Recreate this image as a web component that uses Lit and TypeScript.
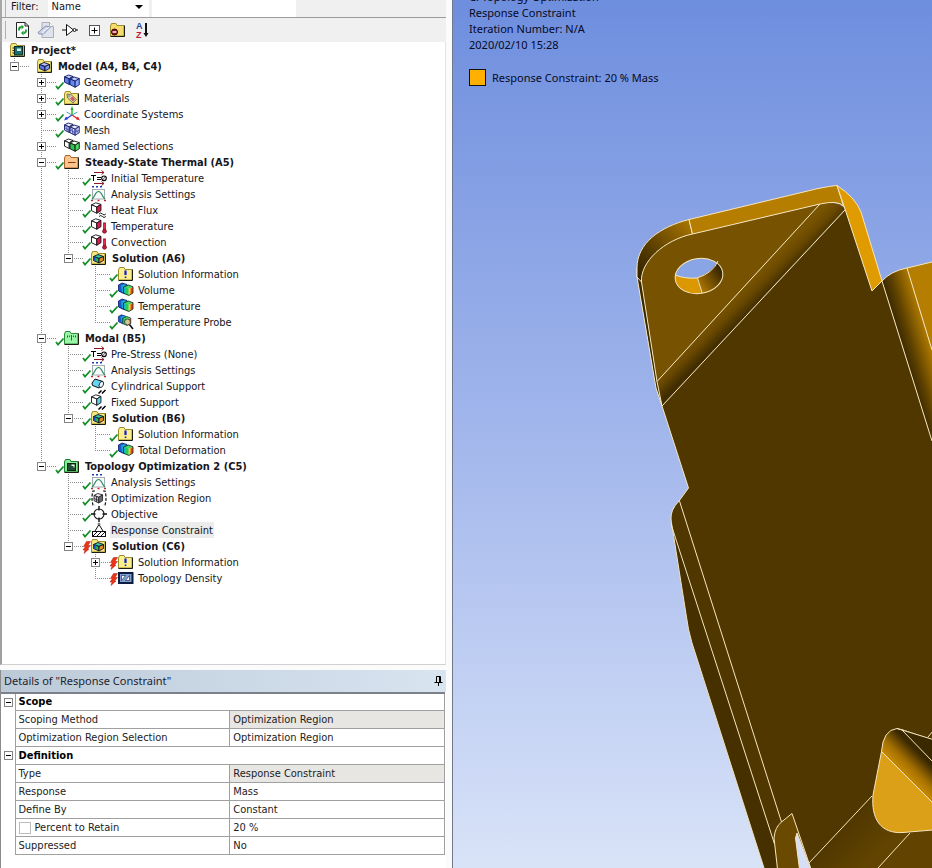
import { LitElement, html, svg, css, nothing, TemplateResult } from "lit";
import { customElement, property } from "lit/decorators.js";
import { classMap } from "lit/directives/class-map.js";

type Status = "ok" | "stale";

interface TreeNode {
  label: string;
  icon: string;
  status?: Status;
  bold?: boolean;
  open?: boolean;
  selected?: boolean;
  children?: TreeNode[];
}

const n = (label: string, icon: string, extra: Partial<TreeNode> = {}): TreeNode => ({
  label,
  icon,
  status: "ok",
  ...extra,
});

const MODEL: TreeNode = {
  label: "Model (A4, B4, C4)",
  icon: "model",
  bold: true,
  open: true,
  children: [
    n("Geometry", "geometry", { open: false, children: [] }),
    n("Materials", "materials", { open: false, children: [] }),
    n("Coordinate Systems", "axes", { open: false, children: [] }),
    n("Mesh", "mesh"),
    { label: "Named Selections", icon: "named", open: false, children: [] },
    n("Steady-State Thermal (A5)", "thermal", {
      bold: true,
      open: true,
      children: [
        n("Initial Temperature", "initial"),
        n("Analysis Settings", "settings"),
        n("Heat Flux", "flux"),
        n("Temperature", "temperature"),
        n("Convection", "temperature"),
        n("Solution (A6)", "solution", {
          bold: true,
          open: true,
          children: [
            n("Solution Information", "info"),
            n("Volume", "result"),
            n("Temperature", "result"),
            n("Temperature Probe", "probe"),
          ],
        }),
      ],
    }),
    n("Modal (B5)", "modal", {
      bold: true,
      open: true,
      children: [
        n("Pre-Stress (None)", "initial"),
        n("Analysis Settings", "settings"),
        n("Cylindrical Support", "cylinder"),
        n("Fixed Support", "fixed"),
        n("Solution (B6)", "solution", {
          bold: true,
          open: true,
          children: [n("Solution Information", "info"), n("Total Deformation", "result")],
        }),
      ],
    }),
    n("Topology Optimization 2 (C5)", "topology", {
      bold: true,
      open: true,
      children: [
        n("Analysis Settings", "settings"),
        n("Optimization Region", "region"),
        n("Objective", "objective"),
        n("Response Constraint", "constraint", { selected: true }),
        n("Solution (C6)", "solution", {
          bold: true,
          status: "stale",
          open: true,
          children: [
            n("Solution Information", "info", { status: "stale", open: false, children: [] }),
            n("Topology Density", "density", { status: "stale" }),
          ],
        }),
      ],
    }),
  ],
};

const folder = (face: string, edge = "#a08c28") => svg`
  <path d="M.5 4 L1.5 1.5 H6 L7 3.5 H14 V14 H.5 Z" fill=${face} stroke=${edge}/>
  <path d="M14.5 3.5 V14.5 H.5" fill="none" stroke="#1c1c10"/>`;

const cube = (x: number, y: number, s: number, top: string, left: string, right: string, edge = "#111") => svg`
  <g transform=${`translate(${x} ${y}) scale(${s})`} stroke=${edge} stroke-width=${0.9 / s} stroke-linejoin="round">
    <path d="M0 2 L4 0 L9 1.5 L5 4 Z" fill=${top}/>
    <path d="M0 2 L5 4 V10 L0 7.5 Z" fill=${left}/>
    <path d="M5 4 L9 1.5 V7.5 L5 10 Z" fill=${right}/>
  </g>`;

const hex = (top: string, left: string, right: string) => svg`
  <g stroke="#0c1030" stroke-width=".9" stroke-linejoin="round">
    <path d="M2.500 6.500 L7 4.500 L12.500 6.500 L8 8.500 Z" fill=${top}/>
    <path d="M2.500 6.500 L8 8.500 V13 L2.500 10.500 Z" fill=${left}/>
    <path d="M8 8.500 L12.500 6.500 V10.500 L8 13 Z" fill=${right}/>
  </g>`;

const slashes = svg`<path d="M7.500 15.500 L10.500 12.500 M11 15.500 L14.500 12" stroke="#000" stroke-width="1.500"/>`;

const rainbow = svg`
  <path d="M.5 3 L4 1 L9 2.500 V10 L5.500 11.500 L.5 9 Z" fill="#1858d8" stroke="#0c1858" stroke-width=".8"/>
  <path d="M3 3.500 L6 2.200 L8.500 3 V9 L5.500 11 L4 9.500 Z" fill="#14a8d4"/>
  <path d="M5.500 5 L10.500 3 L15 4.800 L10.800 7 Z" fill="#48d860"/>
  <path d="M5.500 5 L10.800 7 V13.500 L5.500 11.300 Z" fill="#28cc54"/>
  <path d="M5.500 5 L7 5.600 V12 L5.500 11.300 Z" fill="#18b4c4"/>
  <path d="M10.800 7 L13 5.900 V12.200 L10.800 13.500 Z" fill="#f0d020"/>
  <path d="M12.500 6.200 L15 4.800 V11 L12.500 12.500 Z" fill="#f04818"/>
  <path d="M5.500 5 L10.500 3 L15 4.800 V11 L10.800 13.500 L5.500 11.300 Z" fill="none" stroke="#102020" stroke-width=".8"/>`;

const ICONS: Record<string, TemplateResult> = {
  project: svg`${folder("#f4e77c")}
    <rect x="4.500" y="4.500" width="8" height="8.500" fill="#16706c" stroke="#0c2c2c"/>
    <rect x="7" y="6.500" width="4" height="2.500" fill="#d8ece8"/>
    <path d="M4.500 6 H2.500 M4.500 8.500 H2.500 M4.500 11 H2.500" stroke="#222"/>`,
  model: svg`${folder("#f4e77c")}${hex("#b4c2f8", "#5a74e0", "#8498f0")}`,
  geometry: svg`${cube(0.5, 1, 0.95, "#b9cbff", "#5c7ff0", "#7896f4", "#10185a")}
    ${cube(6, 3, 1.03, "#b9cbff", "#6488f4", "#86a2fa", "#10185a")}`,
  materials: svg`${folder("#f4e77c")}
    <path d="M3 4 L7 4.500 L12.500 9.500 L9 13 L3.500 8 Z" fill="#d4cfc0" stroke="#6a6250" stroke-width=".8"/>
    <path d="M6 8.500 L8.500 6.500 L11 9.500 L9 11.500 Z" fill="#d8584a"/>
    <circle cx="5" cy="6" r=".9" fill="#fff" stroke="#444" stroke-width=".5"/>`,
  axes: svg`
    <path d="M8 9 V2" stroke="#1fae2c" stroke-width="1.400"/><path d="M8 0 L9.500 4 H6.500 Z" fill="#1fae2c"/>
    <path d="M8 9 L2 13" stroke="#2848d8" stroke-width="1.400"/><path d="M0 14.500 L2 10.500 L4.500 13 Z" fill="#2848d8"/>
    <path d="M8 9 L14 13" stroke="#d8282c" stroke-width="1.400"/><path d="M16 14.500 L11.500 13 L14 10.500 Z" fill="#d8282c"/>
    <path d="M8 9 L2.500 6 M8 9 L13.500 6" stroke="#46a8a0"/>`,
  mesh: svg`${cube(0.5, 1, 0.95, "#e4e8ff", "#ccd4fc", "#dce0ff", "#181c60")}
    ${cube(6, 3, 1.03, "#e4e8ff", "#ccd4fc", "#dce0ff", "#181c60")}
    <path d="M.5 6 L5 8 M3 4 V10 M6 8 L11 10.500 L15 8 M8.500 6.500 V12.500 M13 5.500 V11.500 M.5 3 L5 10 M6 5.500 L11 13 M11 7.500 L15 10.500" stroke="#3440a8" stroke-width=".6" fill="none"/>`,
  named: svg`${cube(0.5, 1, 0.95, "#fff", "#fff", "#fff")}${cube(6, 3, 1.03, "#f4fff4", "#2fc24c", "#4cdc64")}`,
  thermal: svg`${folder("#fbc68e", "#a8642c")}<path d="M4 8.500 H11.500" stroke="#8a3c10"/>`,
  modal: svg`${folder("#9cf4a6", "#2c8c3c")}<path d="M3.500 5.500 V7.500 M5.500 5.500 V7 M7.500 5 V10.500 M9.500 5.500 V7 M11.500 5.500 V7.500" stroke="#185c24" stroke-width=".9"/>`,
  topology: svg`${folder("#86ee92", "#1e7c30")}<rect x="3.500" y="5.500" width="8" height="7" fill="#234c34" stroke="#0c2414"/>
    <path d="M7.500 6.500 H10.500 V9.500 H9.500 V8 H7.500 Z" fill="#eafaea"/>`,
  initial: svg`
    <path d="M3 2.500 H13 M10.500 .5 L13 2.500 L10.500 4.500 M3 13.500 H13 M10.500 11.500 L13 13.500 L10.500 15.500" stroke="#8c1c24" fill="none"/>
    <path d="M0 5.500 H5 M2.500 5.500 V11 M6 7.500 H10 M6 9.500 H10" stroke="#000"/>
    <ellipse cx="13" cy="8.300" rx="2.300" ry="2.300" fill="none" stroke="#000" stroke-width="1.100"/><path d="M11.500 9.800 L14.500 6.800" stroke="#000" stroke-width=".7"/>`,
  settings: svg`
    <rect x="1.500" y="3.500" width="12" height="9.500" fill="#f8fafc" stroke="#8e98a4" stroke-width=".8"/>
    <path d="M1 13 C4 11 4 5.500 7.500 5.500 S11 11 14 13" fill="none" stroke="#2d8c58" stroke-width="1.200"/>
    <path d="M1 .8 H3 M5 .8 H7 M9 .8 H11" stroke="#2038c0" stroke-width="1.600"/>
    <path d="M0 14.500 H2 M6.500 14.500 H8.500 M13 14.500 H15" stroke="#c02830" stroke-width="1.600"/>`,
  flux: svg`${cube(0.5, 0.8, 1.05, "#fff", "#fff", "#e01850")}
    <path d="M8 12 q1.700 -2 3.400 0 t3.400 0 M8 14.500 q1.700 -2 3.400 0 t3.400 0" fill="none" stroke="#000" stroke-width=".9"/>`,
  temperature: svg`${cube(0.5, 0.8, 1.05, "#fff", "#fff", "#e01850")}
    <path d="M13.500 4.500 V12" stroke="#7c0c1c" stroke-width="2.600"/><path d="M13.500 5.500 V12" stroke="#e0304c"/>
    <circle cx="13.500" cy="13.300" r="2" fill="#c81838" stroke="#5c0814" stroke-width=".6"/>`,
  solution: svg`${folder("#f4e77c")}
    ${hex("#30c8a0", "#28b850", "#e89020")}
    <path d="M2.500 6.500 L4.500 7.200 V11.400 L2.500 10.500 Z" fill="#2048c8"/>`,
  info: svg`${folder("#fbf08c")}<path d="M7.500 4.500 L7.500 9" stroke="#1420d0" stroke-width="2.200"/><rect x="6.700" y="10.500" width="1.600" height="1.600" fill="#1420d0"/>`,
  result: rainbow,
  probe: svg`<g transform="scale(.85)">${rainbow}</g>
    <circle cx="9.500" cy="8" r="3" fill="#d8c89c" fill-opacity=".85" stroke="#333" stroke-width=".8"/><path d="M11.500 10.500 L15 15" stroke="#111" stroke-width="1.600"/>`,
  cylinder: svg`<path d="M1 5 L4 1 L12 3.500 L11.500 7 L8 10 L1.500 7.500 Z" fill="#68d4f4" stroke="#111"/>
    <ellipse cx="10.300" cy="6.500" rx="2" ry="3.200" transform="rotate(25 10.300 6.500)" fill="#e8fbff" stroke="#111" stroke-width=".8"/>${slashes}`,
  fixed: svg`${cube(0.5, 0.8, 1.05, "#fff", "#fff", "#64d0f0")}${slashes}`,
  region: svg`<path d="M4 1 H2 Q0 8 2 15 H4 M12 1 H14 Q16 8 14 15 H12" fill="none" stroke="#111" stroke-width="1.200" stroke-dasharray="3 1.500"/>
    ${cube(3, 3.5, 0.95, "#f4ecfa", "#dcc4ec", "#70687c", "#222")}<path d="M3 8.500 L7.500 10.500 M5.500 6.500 V12" stroke="#222" stroke-width=".8"/>`,
  objective: svg`<circle cx="8" cy="8" r="5" fill="#fff" stroke="#111" stroke-width="1.100"/>
    <path d="M8 0 V4.500 M8 11.500 V16 M0 8 H4.500 M11.500 8 H16" stroke="#111" stroke-width="1.400"/>`,
  constraint: svg`<path d="M4 9 L8 2.500 L12 9" fill="#fff" stroke="#111"/><circle cx="8" cy="2" r="1" fill="#fff" stroke="#111" stroke-width=".6"/>
    <rect x="1.500" y="9.500" width="13" height="5" fill="#fff" stroke="#111"/><path d="M2 14 L6 10 M6 14 L10 10 M10 14 L14 10" stroke="#111"/>`,
  density: svg`<rect x="1" y="3" width="13.500" height="10" fill="#7fa0d0" stroke="#0c1c40" stroke-width="2"/>
    <path d="M3.500 10.500 V5.500 H7.500 Z M7.500 10.500 L11.500 5.500 V10.500 Z" fill="#fff" stroke="#0c1c40" stroke-width=".6"/>`,
  check: svg`<path d="M1 12 L3 14.500 L8.500 8.500" fill="none" stroke="#14902a" stroke-width="1.800"/>`,
  bolt: svg`<path d="M4.500 3.500 H8.500 L6 7.500 H8.500 L5.500 11 H7 L2 15.500 L3 12 H1 L3.500 8.500 H1.500 Z" fill="#ec3418" stroke="#b01c08" stroke-width=".5"/>`,
};

@customElement("tree-item")
class TreeItem extends LitElement {
  @property({ attribute: false }) node!: TreeNode;
  @property({ type: Boolean }) last = false;

  static styles = css`
    :host {
      display: block;
      background: repeating-linear-gradient(#8c8c8c 0 1px, transparent 1px 2px) 4px 0 / 1px 100% no-repeat;
    }
    :host([last]) {
      background-size: 1px 8px;
    }
    .row {
      display: flex;
      align-items: center;
      height: 16px;
      background: repeating-linear-gradient(90deg, #8c8c8c 0 1px, transparent 1px 2px) 4px 8px / 16px 1px no-repeat;
    }
    .toggle {
      flex: none;
      width: 9px;
      height: 9px;
      padding: 0;
      border: 0;
      background: none;
      margin-right: 9px;
    }
    svg {
      display: block;
      flex: none;
      overflow: visible;
    }
    .gap {
      flex: none;
      width: 18px;
    }
    .label {
      line-height: 14px;
      white-space: nowrap;
      margin-left: 3px;
      padding: 2px 1px 0;
    }
    .bold {
      font-weight: bold;
      margin-left: 4px;
    }
    .selected {
      background: #ececec;
    }
    .children {
      margin-left: 27px;
    }
  `;

  render() {
    const { label, icon, status, bold, open, selected, children } = this.node;
    return html`
      <div class="row" role="treeitem" aria-label=${label}>
        ${children
          ? html`<button class="toggle" aria-label="Toggle ${label}">
              <svg width="9" height="9" viewBox="0 0 9 9">
                <rect x=".5" y=".5" width="8" height="8" fill="#fff" stroke="#848484" />
                <path d=${open ? "M2 4.5 H7" : "M2 4.5 H7 M4.5 2 V7"} stroke="#000" />
              </svg>
            </button>`
          : html`<span class="gap"></span>`}
        <svg width="9" height="16" viewBox="0 0 9 16">
          ${status === "ok" ? ICONS.check : status === "stale" ? ICONS.bolt : nothing}
        </svg>
        <svg width="16" height="16" viewBox="0 0 16 16">${ICONS[icon]}</svg>
        <span class=${classMap({ label: true, bold: !!bold, selected: !!selected })}>${label}</span>
      </div>
      ${open && children
        ? html`<div class="children" role="group">
            ${children.map((c, i) => html`<tree-item .node=${c} ?last=${i === children.length - 1}></tree-item>`)}
          </div>`
        : nothing}
    `;
  }
}

@customElement("details-panel")
class DetailsPanel extends LitElement {
  static styles = css`
    :host {
      display: block;
      background: #fff;
      border-left: 1px solid #8c8c8c;
      padding-bottom: 13px;
    }
    .head {
      display: flex;
      align-items: center;
      justify-content: space-between;
      height: 22px;
      padding: 0 3px;
      color: #1c2430;
      background: linear-gradient(90deg, #bccad8, #d8e4f0);
      font-family: "Noto Sans", "Open Sans", sans-serif;
    }
    .pin {
      border: 0;
      padding: 0;
      background: none;
      display: block;
    }
    svg {
      display: block;
    }
    table {
      width: calc(100% - 1px);
      border-collapse: collapse;
      table-layout: fixed;
      border-top: 2px solid #7c8088;
    }
    th,
    td {
      box-sizing: border-box;
      height: 18px;
      padding: 0 3px;
      border: 1px solid #a0a0a0;
      text-align: left;
      font-weight: normal;
      line-height: 16px;
      color: #222;
      white-space: nowrap;
    }
    .g {
      width: 14px;
      border: 0;
      padding: 0 0 0 3px;
    }
    .section {
      font-weight: bold;
      color: #000;
    }
    .ro {
      background: #e8e6e3;
    }
    .toggle {
      display: block;
      padding: 0;
      border: 0;
      background: none;
    }
    label {
      display: flex;
      align-items: center;
      gap: 4px;
    }
    input {
      appearance: none;
      margin: 0;
      width: 12px;
      height: 12px;
      border: 1px solid #bcbcbc;
      background: #fff;
    }
  `;

  private section(name: string) {
    return html`<tr>
      <td class="g">
        <button class="toggle" aria-label="Collapse ${name}">
          <svg width="9" height="9" viewBox="0 0 9 9">
            <rect x=".5" y=".5" width="8" height="8" fill="#fff" stroke="#848484" />
            <path d="M2 4.500 H7" stroke="#000" />
          </svg>
        </button>
      </td>
      <th class="section" colspan="2">${name}</th>
    </tr>`;
  }

  private row(name: string, value: string, opts: { ro?: boolean; tick?: boolean } = {}) {
    return html`<tr>
      <td class="g"></td>
      <th scope="row">${opts.tick ? html`<label><input type="checkbox" />${name}</label>` : name}</th>
      <td class=${classMap({ ro: !!opts.ro })}>${value}</td>
    </tr>`;
  }

  render() {
    return html`
      <div class="head">
        <span>Details of "Response Constraint"</span>
        <button class="pin" aria-label="Pin panel">
          <svg width="9" height="10" viewBox="0 0 9 10">
            <path d="M2.500 6 V.5 H6.500 V6 M5.500 .5 V6 M.5 6.500 H8.500 M4.500 6.500 V10" fill="none" stroke="#000" />
          </svg>
        </button>
      </div>
      <table>
        <colgroup>
          <col class="g" />
          <col />
          <col />
        </colgroup>
        <tbody>
          ${this.section("Scope")}
          ${this.row("Scoping Method", "Optimization Region", { ro: true })}
          ${this.row("Optimization Region Selection", "Optimization Region")}
          ${this.section("Definition")}
          ${this.row("Type", "Response Constraint", { ro: true })}
          ${this.row("Response", "Mass")}
          ${this.row("Define By", "Constant")}
          ${this.row("Percent to Retain", "20 %", { tick: true })}
          ${this.row("Suppressed", "No")}
        </tbody>
      </table>
    `;
  }
}

@customElement("graphics-view")
class GraphicsView extends LitElement {
  static styles = css`
    :host {
      display: block;
      position: relative;
      overflow: hidden;
      background: linear-gradient(#6e8ede, #a4b8ec 52%, #d9e3f8);
      font-family: "Noto Sans", "Open Sans", sans-serif;
      color: #060a24;
    }
    .scene {
      position: absolute;
      inset: 0;
      width: 100%;
      height: 100%;
    }
    .notes {
      position: relative;
      padding-left: 16px;
      margin-top: -11px;
      line-height: 16px;
      white-space: nowrap;
    }
    .legend {
      display: flex;
      align-items: center;
      gap: 6px;
      margin-top: 16px;
    }
    .swatch {
      box-sizing: border-box;
      width: 17px;
      height: 17px;
      background: #ffb000;
      border: 1px solid #111;
    }
  `;

  render() {
    return html`
      <svg class="scene" viewBox="453 0 479 868" preserveAspectRatio="xMinYMin slice" role="img" aria-label="Bracket model">
        <defs>
          <linearGradient id="corner" gradientUnits="userSpaceOnUse" x1="637" y1="275" x2="692" y2="225">
            <stop offset="0" stop-color="#332300" />
            <stop offset=".35" stop-color="#553b00" />
            <stop offset="1" stop-color="#a87400" />
          </linearGradient>
          <linearGradient id="bend" gradientUnits="userSpaceOnUse" x1="740" y1="291" x2="755" y2="306">
            <stop offset="0" stop-color="#785300" />
            <stop offset=".45" stop-color="#6a4900" />
            <stop offset="1" stop-color="#412d00" />
          </linearGradient>
          <linearGradient id="bore" gradientUnits="userSpaceOnUse" x1="698" y1="285" x2="722" y2="268">
            <stop offset="0" stop-color="#ad7700" />
            <stop offset=".5" stop-color="#6c4a00" />
            <stop offset="1" stop-color="#2c1e00" />
          </linearGradient>
          <linearGradient id="rib" gradientUnits="userSpaceOnUse" x1="884" y1="283" x2="911" y2="275">
            <stop offset="0" stop-color="#3e2b00" />
            <stop offset=".3" stop-color="#5c4000" />
            <stop offset="1" stop-color="#b67e00" />
          </linearGradient>
          <linearGradient id="slot" gradientUnits="userSpaceOnUse" x1="893" y1="763" x2="914" y2="742">
            <stop offset="0" stop-color="#c88a00" />
            <stop offset=".35" stop-color="#a37000" />
            <stop offset=".85" stop-color="#3a2800" />
            <stop offset="1" stop-color="#3a2800" />
          </linearGradient>
          <linearGradient id="foot" gradientUnits="userSpaceOnUse" x1="835" y1="835" x2="865" y2="865">
            <stop offset="0" stop-color="#503700" />
            <stop offset="1" stop-color="#624400" />
          </linearGradient>
        </defs>
        <g fill="none" stroke="#f6e6bc" stroke-width="1" stroke-linejoin="round">
          <path stroke="none" fill="#503700" d="M662 406 L845 209 L872 291 L882 281 L932 441 V868 H764 L692 643 L686 614 L673 532 L671 518 Q671 509 679 501 L688.500 488 Z" />
          <path stroke="none" fill="#463000" d="M671 520 L673 532 L686 614 Q688 630 692 643 L764 868 H778 L774 843 Z" />
          <path stroke="none" fill="url(#rib)" d="M882 281 Q891 271 907 268 L932 350 V441 Z" />
          <path stroke="none" fill="#b67e00" d="M907 268 L932 262 V350 Z" />
          <path d="M872 291 L882 281 Q891 271 907 268 L932 262 M907 268 L932 350 M882 281 L932 441" />

          <path stroke="none" fill="#775200" d="M657 381.500 L641.500 282 C640 262 664 240 692.500 234 L820 204 Z" />
          <path stroke="none" fill="url(#bend)" d="M820 204 Q838 200 845 209 L662 406 L657 381.500 Z" />
          <path fill="#3a2800" d="M637 268 V277 L656 388 L662 406 L657 381.500 L641.500 282 Z" />
          <path fill="url(#corner)" d="M637 268 C637 243 660 227 689 219.500 L692.500 234 C664 240 640 262 641.500 282 L637 277 Z" />
          <path fill="#b67e00" d="M689 219.500 L816 189 Q830 186 837 185.500 L843.500 206 Q838 200 820 204 L692.500 234 Z" />
          <path fill="#e09b00" d="M837 185.500 Q855 197 861 212 L882 281 L872 291 L845 209 Z" />
          <path d="M820 204 L657 381.500 M845 210 L662 406 L688.500 488 L679 501 Q670 510 671 520 L673 532 L686 614 Q688 630 692 643 L764 868" />

          <clipPath id="hole"><ellipse cx="699" cy="276" rx="24" ry="17.500" transform="rotate(-9 699 276)" /></clipPath>
          <g clip-path="url(#hole)" stroke="none">
            <rect x="670" y="255" width="60" height="45" fill="#8aa5e6" />
            <path fill="url(#bore)" d="M697 278 Q713 272 718 260 L728 262 V300 H702 Z" />
            <path fill="#dc9800" d="M673 275 Q685 279 697 278 L702 298 H670 Z" />
          </g>
          <ellipse cx="699" cy="276" rx="24" ry="17.500" transform="rotate(-9 699 276)" />
          <path d="M675.500 275 Q685 279 697 278 Q713 273 718 261 M697.500 278 L702 293" />

          <path d="M679.500 501 L781.500 822 M671 524 L774.500 844" />
          <path stroke="none" fill="url(#foot)" d="M809 863 L872 796 L910 833 L932 830 V868 H811 Z" />
          <path d="M809 863 L872 796 M878 868 L910 833" />
          <path fill="#6a4a00" d="M777.500 869 L774 838 Q775 827 781.500 822 L792 813.500 L811 869 Z" />
          <path fill="#d5dff7" d="M799.500 869 L795.500 838 L797 833 L810.500 869 Z" />

          <path fill="url(#slot)" d="M881.500 751.500 Q883 730 897 728.500 L903 730 L933 740 V803 Z" />
          <path stroke="none" fill="#3a2800" d="M903 730 L932 739 V761 Z" />
          <path d="M897 728.500 L933 739.500 M902 730 L933 762 M928 737 L933 731" />
          <path fill="#dba017" d="M881.500 751.500 L873 795 C871 818 880 834 903 832.500 L933 830 V803 Z" />
        </g>
      </svg>
      <div class="notes">
        <div>C: Topology Optimization</div>
        <div>Response Constraint</div>
        <div>Iteration Number: N/A</div>
        <div>2020/02/10 15:28</div>
        <div class="legend"><span class="swatch"></span><span>Response Constraint: 20 % Mass</span></div>
      </div>
    `;
  }
}

@customElement("app-root")
class AppRoot extends LitElement {
  static styles = css`
    :host {
      display: grid;
      grid-template-columns: minmax(0, 452fr) minmax(0, 480fr);
      min-height: 100vh;
      overflow: hidden;
      font: 11px "DejaVu Sans Condensed", "DejaVu Sans", "Noto Sans", sans-serif;
      font-stretch: condensed;
      color: #16161c;
    }
    .side {
      display: flex;
      flex-direction: column;
      padding-right: 6px;
      background: #fbfbfb;
    }
    .bar {
      display: flex;
      align-items: center;
      background: #f0f0f0;
      border-left: 2px solid #a8a8a8;
    }
    .filter {
      height: 17px;
      overflow: hidden;
      border-bottom: 1px solid #9c9c9c;
    }
    .grip {
      width: 3px;
      align-self: stretch;
      border-right: 1px solid #b0b0b0;
    }
    .filter label {
      margin: 0 9px 4px 5px;
    }
    .combo {
      display: flex;
      align-items: center;
      width: 101px;
      height: 20px;
      background: #fff;
      margin-bottom: 4px;
    }
    select {
      appearance: none;
      flex: 1;
      min-width: 0;
      padding: 0 4px;
      border: 0;
      background: none;
      font: inherit;
      color: inherit;
    }
    .arrow {
      margin-right: 6px;
      border: 4px solid transparent;
      border-top-color: #000;
      border-bottom: 0;
      pointer-events: none;
    }
    .search {
      width: 144px;
      height: 20px;
      box-sizing: border-box;
      margin-left: 3px;
      border: 0;
      background: #fff;
    }
    .tools {
      height: 24px;
      gap: 8px;
    }
    .tools .grip {
      margin: 3px 0;
    }
    .tool {
      padding: 0;
      border: 0;
      background: none;
    }
    svg {
      display: block;
      overflow: visible;
    }
    .tree {
      flex: 1;
      background: #fff;
      border-left: 2px solid #a0a0a0;
      border-bottom: 1px solid #d0d0d0;
      border-right: 1px solid #e4e4e4;
      padding-left: 8px;
    }
    .root {
      display: flex;
      align-items: center;
      gap: 5px;
      height: 16px;
      font-weight: bold;
    }
    details-panel {
      margin-top: 5px;
    }
    graphics-view {
      border-left: 1px solid #70788c;
    }
  `;

  private tool(name: string, art: unknown) {
    return html`<button class="tool" aria-label=${name}>
      <svg width="16" height="16" viewBox="0 0 16 16">${art}</svg>
    </button>`;
  }

  render() {
    return html`
      <div class="side">
        <div class="bar filter">
          <span class="grip"></span>
          <label for="filter">Filter:</label>
          <span class="combo">
            <select id="filter">
              <option>Name</option>
              <option>Tag</option>
              <option>Type</option>
            </select>
            <span class="arrow"></span>
          </span>
          <input class="search" type="text" aria-label="Filter text" />
        </div>
        <div class="bar tools">
          <span class="grip"></span>
          ${this.tool(
            "Refresh",
            svg`<path d="M2.500 .5 H11 L14.500 4 V15.500 H2.500 Z" fill="#fff" stroke="#222"/><path d="M11 .5 V4 H14.500" fill="none" stroke="#222"/>
              <path d="M5 8.500 V7.500 Q5 5 7.500 5 M12 7.500 V8.500 Q12 11 9.500 11" fill="none" stroke="#1c9c34" stroke-width="1.800"/>
              <path d="M7.500 2.500 L10 5 L7.500 7.500 Z M9.500 8.500 L7 11 L9.500 13.500 Z" fill="#1c9c34"/>`,
          )}
          ${this.tool(
            "Clear",
            svg`<path d="M4 .5 H11.500 L15.500 4.500 V15.500 H4 Z" fill="#dfe3ec" stroke="#a8aebc"/><path d="M11.500 .5 V4.500 H15.500" fill="#fff" stroke="#a8aebc"/>
              <path d="M0 10.500 L7.500 4 L12.500 5 L5.500 12 L1 12 Z" fill="#c8d2ea" stroke="#8892ac"/><path d="M5 11.500 V9.500 L11.500 5" fill="none" stroke="#fff"/>`,
          )}
          ${this.tool(
            "Filter by tag",
            svg`<path d="M4.500 2.500 L11.500 8 L4.500 13.500 Z" fill="#fff" stroke="#111"/><circle cx="12.500" cy="8" r="1.500" fill="#fff" stroke="#111"/><path d="M0 8 H4.500 M14 8 H16" stroke="#111"/>`,
          )}
          ${this.tool(
            "Expand all",
            svg`<rect x="3.500" y="3.500" width="10" height="10" fill="#fff" stroke="#555"/><path d="M5.500 8.500 H11.500 M8.500 5.500 V11.500" stroke="#000"/>`,
          )}
          ${this.tool(
            "Hide folders",
            svg`${folder("#f6dc6c")}<circle cx="4.500" cy="10" r="3" fill="#8c1420" stroke="#300"/><path d="M2.500 10 H6.500" stroke="#fff" stroke-width="1.400"/>`,
          )}
          ${this.tool(
            "Sort",
            svg`<text x="2" y="7" font-size="9" font-weight="bold" font-family="Liberation Sans, sans-serif" fill="#24489c">A</text>
              <text x="2" y="16" font-size="9" font-weight="bold" font-family="Liberation Sans, sans-serif" fill="#b81c34">Z</text>
              <path d="M12 1 V12" stroke="#111" stroke-width="2"/><path d="M9.500 11 H14.500 L12 15 Z" fill="#111"/>`,
          )}
        </div>
        <div class="tree" role="tree" aria-label="Outline">
          <div class="root">
            <svg width="16" height="16" viewBox="0 0 16 16">${ICONS.project}</svg>
            <span>Project*</span>
          </div>
          <tree-item .node=${MODEL} last></tree-item>
        </div>
        <details-panel></details-panel>
      </div>
      <graphics-view></graphics-view>
    `;
  }
}
